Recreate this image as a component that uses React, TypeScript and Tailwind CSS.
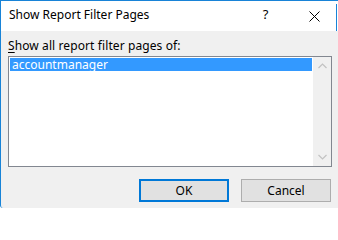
import React from "react"

function Chevron({ dir }: { dir: "up" | "down" }) {
  return (
    <svg width="9" height="6" viewBox="0 0 9 6" className="block">
      <path
        d={dir === "up" ? "M0.5 5L4.5 1L8.5 5" : "M0.5 1L4.5 5L8.5 1"}
        fill="none"
        stroke="#c2c2c2"
        strokeWidth="1.2"
      />
    </svg>
  )
}

export default function App() {
  return (
    <div
      className="w-[338px] h-[210px] bg-white overflow-hidden"
      style={{ fontFamily: '"Noto Sans", "Segoe UI", sans-serif' }}
    >
      <div className="w-[338px] h-[208px] flex flex-col border-l-[1.5px] border-t border-[#1883d7] bg-[#f0f0f0] rounded-bl-[3px]">
        {/* title bar */}
        <div className="h-[30px] bg-white flex items-center pl-[8px] text-[12px] text-black">
          <span className="flex-1 pb-[2px]">Show Report Filter Pages</span>
          <span className="w-[10px] text-center mr-[38px] text-[13px] pb-[2px]">?</span>
          <svg width="11" height="11" viewBox="0 0 11 11" className="mr-[16px]">
            <path d="M0.5 0.5L10.5 10.5M10.5 0.5L0.5 10.5" stroke="#000" strokeWidth="1" />
          </svg>
          <div className="self-stretch mt-[3px] w-[1.5px] bg-[#1883d7] mr-[1px]" />
        </div>

        {/* body */}
        <div className="flex-1 flex flex-col pl-[7px] pr-[7px] text-[12px] text-black">
          <div className="mt-[6px] h-[18px] leading-[18px] tracking-[0.1px]">
            <span className="underline underline-offset-2">S</span>how all report filter pages of:
          </div>
          <div className="mt-[1px] w-[324px] h-[111px] border border-[#828790] bg-white flex">
            <div className="flex-1 p-[1px]">
              <div className="h-[13px] bg-[#3399ff] text-white leading-[13px] pl-[2px]">accountmanager</div>
            </div>
            <div className="w-[18px] bg-[#f0f0f0] flex flex-col items-center justify-between py-[6px]">
              <Chevron dir="up" />
              <Chevron dir="down" />
            </div>
          </div>

          <div className="mt-[12px] flex justify-end gap-[12px]">
            <button className="w-[90px] h-[23px] bg-[#e1e1e1] border-2 border-[#0078d7] text-[12px] leading-none">
              OK
            </button>
            <button className="w-[90px] h-[23px] bg-[#e1e1e1] border border-[#adadad] text-[12px] leading-none">
              Cancel
            </button>
          </div>
        </div>
      </div>
    </div>
  )
}
